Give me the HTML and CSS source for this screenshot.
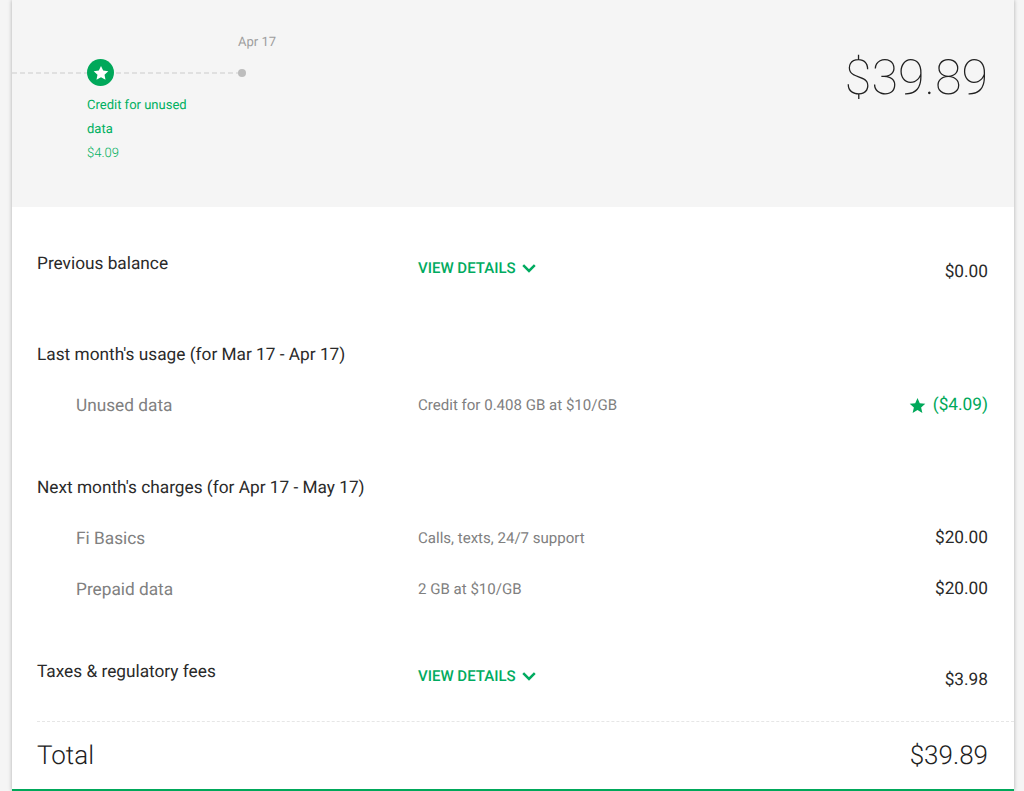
FILE: index.html
```html
<!DOCTYPE html>
<html lang="en">
<head>
<meta charset="utf-8">
<title>Statement</title>
<link rel="stylesheet" href="styles.css">
</head>
<body>
<main class="card">
  <header class="summary">
    <div class="timeline">
      <div class="line"></div>
      <div class="date">Apr 17</div>
      <div class="dot"></div>
      <div class="badge">
        <svg viewBox="0 0 24 24" width="18" height="18"><path fill="#fff" d="M12 2.6l2.9 6.2 6.8.8-5 4.6 1.3 6.7-6-3.4-6 3.4 1.3-6.7-5-4.6 6.8-.8z"/></svg>
      </div>
      <div class="credit">
        <div class="credit-title">Credit for unused data</div>
        <div class="credit-amount">$4.09</div>
      </div>
    </div>
    <div class="big-total">$39.89</div>
  </header>
  <section class="details">
    <div class="row row-balance">
      <div class="label">Previous balance</div>
      <a class="link">VIEW DETAILS <svg viewBox="0 0 14 9" width="14" height="9"><path fill="none" stroke="#00ab60" stroke-width="2.5" d="M1.2 1.2l5.8 5.8 5.8-5.8"/></svg></a>
      <div class="value value-low">$0.00</div>
    </div>
    <div class="row row-head"><div class="label">Last month's usage (for Mar 17 - Apr 17)</div></div>
    <div class="row row-sub">
      <div class="sublabel">Unused data</div>
      <div class="note">Credit for 0.408 GB at $10/GB</div>
      <div class="value credit-value"><svg viewBox="0 0 24 24" width="17" height="17"><path fill="#00a85a" d="M12 1.5l3.2 7.2 7.8.8-5.9 5.2 1.8 7.8-6.9-4.1-6.9 4.1 1.8-7.8L1 9.5l7.8-.8z"/></svg>($4.09)</div>
    </div>
    <div class="row row-head row-next"><div class="label">Next month's charges (for Apr 17 - May 17)</div></div>
    <div class="row row-sub">
      <div class="sublabel">Fi Basics</div>
      <div class="note">Calls, texts, 24/7 support</div>
      <div class="value">$20.00</div>
    </div>
    <div class="row row-sub">
      <div class="sublabel">Prepaid data</div>
      <div class="note">2 GB at $10/GB</div>
      <div class="value">$20.00</div>
    </div>
    <div class="row row-taxes">
      <div class="label">Taxes &amp; regulatory fees</div>
      <a class="link">VIEW DETAILS <svg viewBox="0 0 14 9" width="14" height="9"><path fill="none" stroke="#00ab60" stroke-width="2.5" d="M1.2 1.2l5.8 5.8 5.8-5.8"/></svg></a>
      <div class="value value-low">$3.98</div>
    </div>
    <div class="total">
      <div>Total</div>
      <div class="total-value">$39.89</div>
    </div>
  </section>
</main>
</body>
</html>
```
FILE: styles.css
```css
* { box-sizing: border-box; }
html, body { height: 100%; }
body {
  margin: 0;
  background: #f5f5f5;
  font-family: Roboto, "Liberation Sans", sans-serif;
  color: #212121;
  overflow: hidden;
  text-rendering: geometricPrecision;
}
.card {
  margin: 0 10px 0 12px;
  height: 791px;
  background: #fff;
  border-bottom: 2px solid #00a85a;
  box-shadow: 0 0 4px rgba(0,0,0,.3);
  overflow: hidden;
}
.summary {
  height: 207px;
  background: #f5f5f5;
  display: flex;
  justify-content: space-between;
  padding-right: 26px;
}
.timeline { position: relative; width: 400px; }
.line {
  position: absolute;
  left: 0; top: 72px;
  width: 230px;
  height: 1.5px;
  background: repeating-linear-gradient(90deg, #e0e0e0 0 5px, transparent 5px 8px);
}
.date {
  position: absolute;
  left: 226px; top: 36px;
  font-size: 13px;
  line-height: 14px;
  color: #9e9e9e;
}
.dot {
  position: absolute;
  left: 226px; top: 69px;
  width: 8px; height: 8px;
  border-radius: 50%;
  background: #bdbdbd;
}
.badge {
  position: absolute;
  left: 75px; top: 59px;
  width: 27px; height: 27px;
  border-radius: 50%;
  background: #00a85a;
  display: flex;
  align-items: center;
  justify-content: center;
}
.credit {
  position: absolute;
  left: 75px; top: 94px;
  width: 110px;
  font-size: 13px;
  line-height: 24px;
  color: #00b060;
}
.credit-title { font-weight: 400; }
.credit-amount { font-weight: 300; }
.big-total {
  font-size: 48.5px;
  font-weight: 100;
  line-height: 56px;
  margin-top: 50px;
  color: #212121;
}
.details { padding: 0 0 0 25px; }
.row {
  display: grid;
  grid-template-columns: 381px 1fr auto;
  padding-right: 26px;
  align-items: start;
}
.label { font-size: 17.25px; line-height: 24px; color: #2a2a2a; }
.sublabel { font-size: 17.25px; line-height: 24px; color: #808080; padding-left: 39px; }
.note { font-size: 15.05px; line-height: 22px; color: #808080; }
.value { font-size: 17.25px; line-height: 22px; color: #2a2a2a; text-align: right; }
.value-low { margin-top: 9px; }
.row-balance { height: 136px; padding-top: 45px; }
.row-head { height: 51px; }
.row-next { margin-top: 31px; }
.row-sub { height: 51px; }
.row-taxes { height: 61px; margin-top: 31px; }
.link {
  display: flex;
  align-items: center;
  gap: 6px;
  margin-top: 6px;
  font-size: 15px;
  font-weight: 500;
  line-height: 20px;
  color: #00ab60;
}
.credit-value {
  color: #00a85a;
  display: flex;
  align-items: center;
  justify-content: flex-end;
  gap: 7px;
}
.total {
  border-top: 1px dashed #e6e6e6;
  display: flex;
  justify-content: space-between;
  padding: 17px 26px 0 0;
  font-size: 26px;
  font-weight: 300;
  line-height: 34px;
  color: #212121;
}
.total-value { font-size: 26px; }
```
